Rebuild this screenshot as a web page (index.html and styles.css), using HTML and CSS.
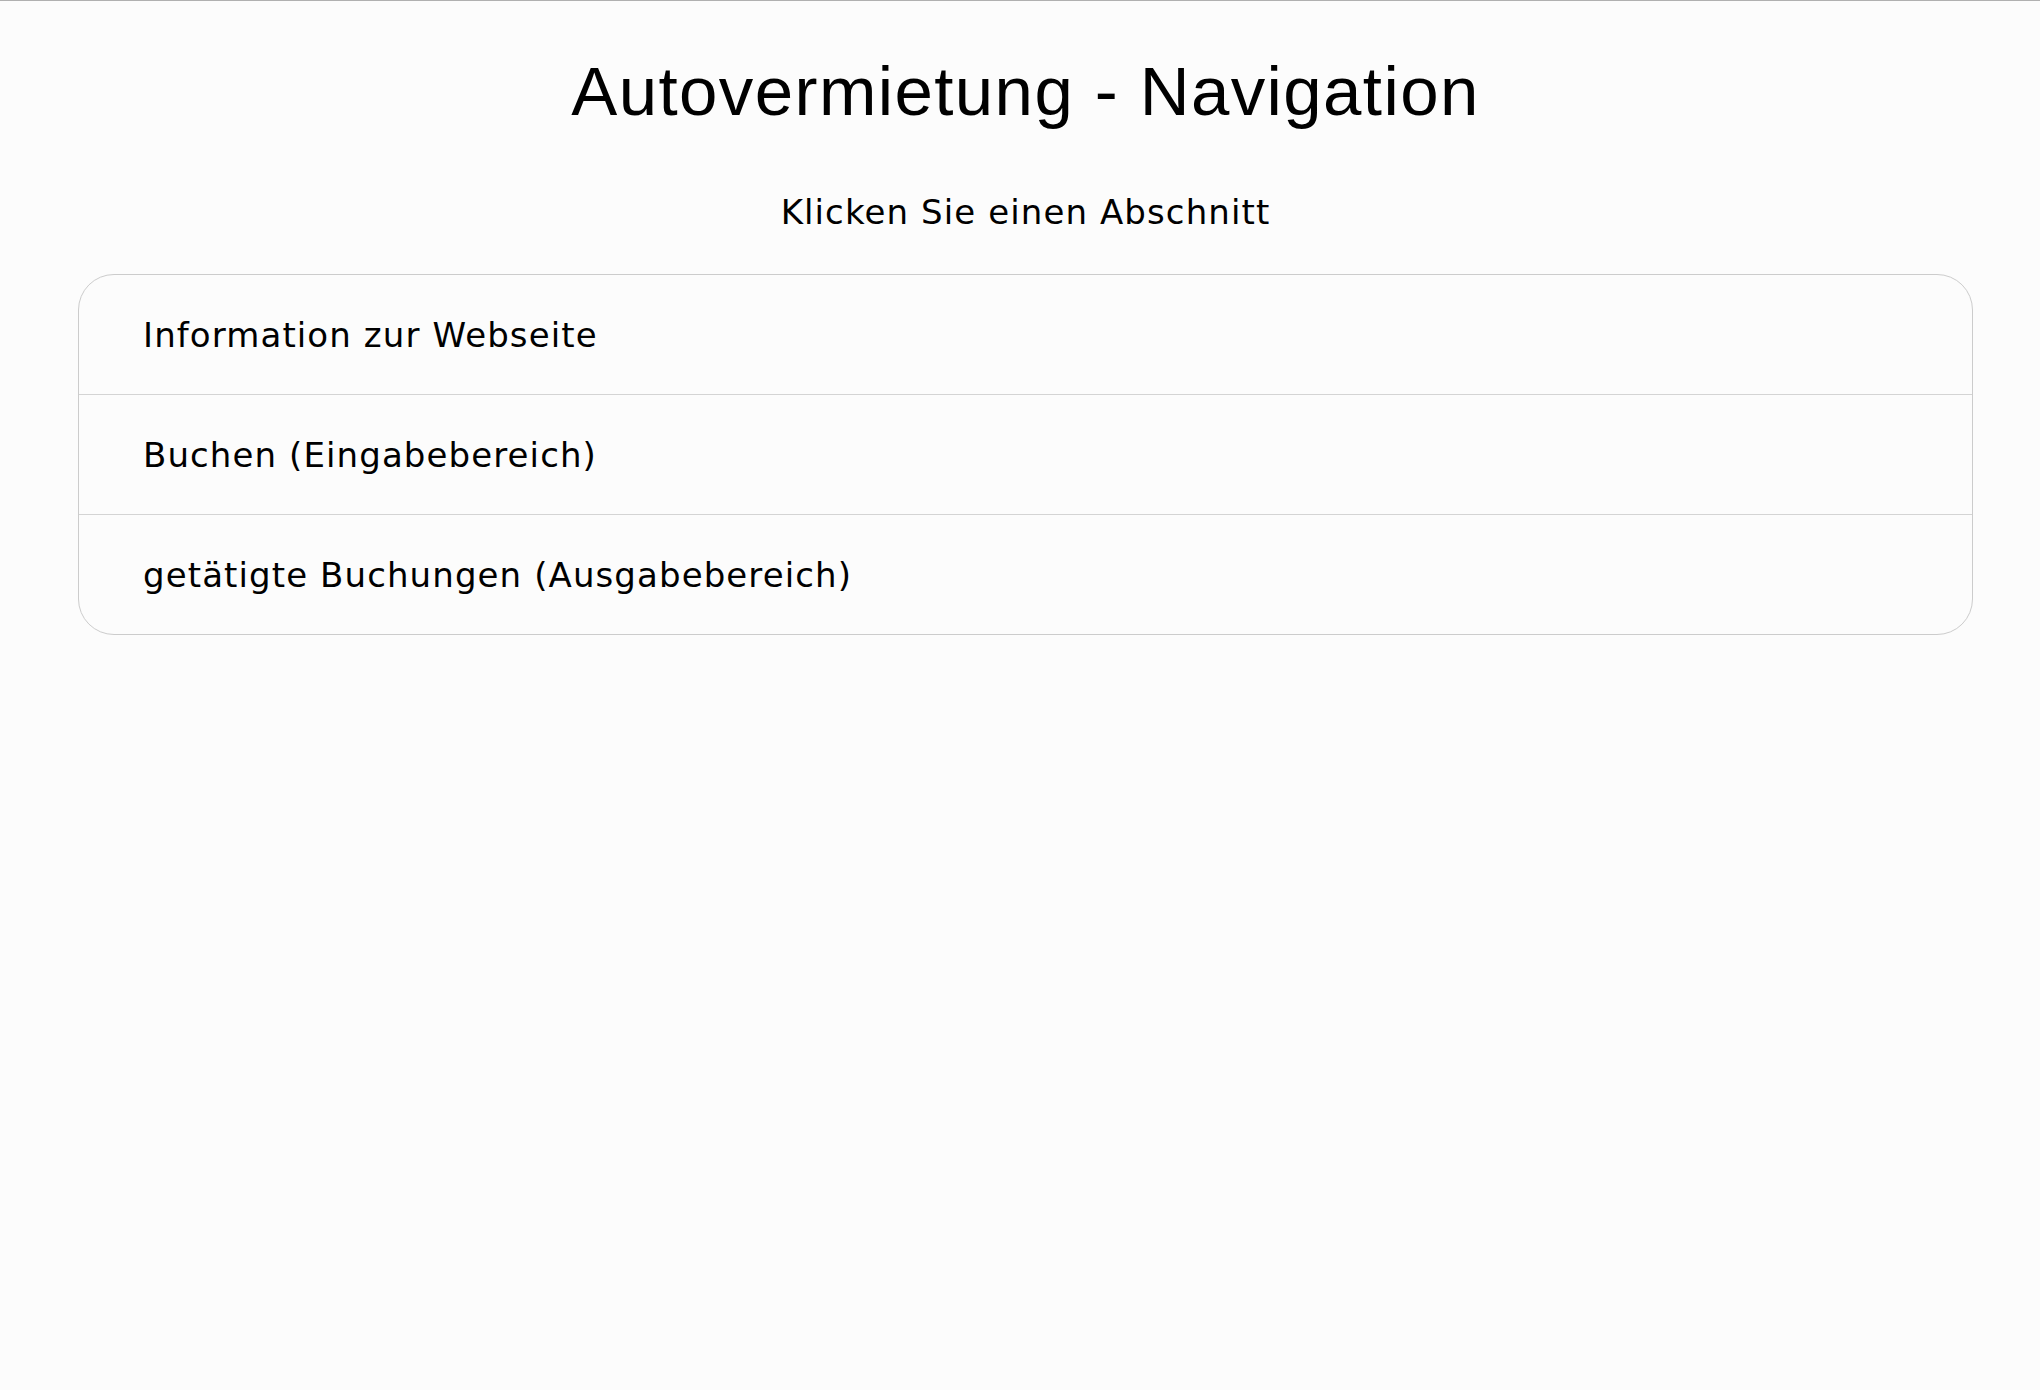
FILE: index.html
```html
<!DOCTYPE html>
<html lang="de">
<head>
<meta charset="utf-8">
<title>Autovermietung - Navigation</title>
<link rel="stylesheet" href="styles.css">
</head>
<body>
<div class="page">
  <h1 class="title">Autovermietung - Navigation</h1>
  <p class="subtitle">Klicken Sie einen Abschnitt</p>
  <nav class="menu">
    <a class="menu-item" href="#info">Information zur Webseite</a>
    <a class="menu-item" href="#buchen">Buchen (Eingabebereich)</a>
    <a class="menu-item" href="#buchungen">getätigte Buchungen (Ausgabebereich)</a>
  </nav>
</div>
</body>
</html>
```

FILE: styles.css
```css
html, body {
  margin: 0;
  padding: 0;
}
body {
  background: #fcfcfc;
  border-top: 1px solid #b0b0b0;
  min-height: 1389px;
  color: #000;
}
.page {
  padding: 0 67px 0 78px;
}
.title {
  margin: 53px 0 0;
  font-family: "Liberation Sans", Arial, sans-serif;
  font-weight: normal;
  font-size: 69px;
  letter-spacing: 1.4px;
  line-height: 76px;
  text-align: center;
}
.subtitle {
  margin: 62px 0 0;
  font-family: "DejaVu Sans", Verdana, sans-serif;
  font-size: 34px;
  letter-spacing: 1.1px;
  line-height: 40px;
  text-align: center;
}
.menu {
  margin-top: 42px;
  border: 1px solid #cccccc;
  border-radius: 36px;
  display: flex;
  flex-direction: column;
  overflow: hidden;
}
.menu-item {
  display: flex;
  align-items: center;
  height: 119px;
  padding: 0 64px;
  font-family: "DejaVu Sans", Verdana, sans-serif;
  font-size: 34px;
  letter-spacing: 1.1px;
  color: #000;
  text-decoration: none;
  border-bottom: 1px solid #d4d4d4;
}
.menu-item:last-child {
  border-bottom: none;
}
```
